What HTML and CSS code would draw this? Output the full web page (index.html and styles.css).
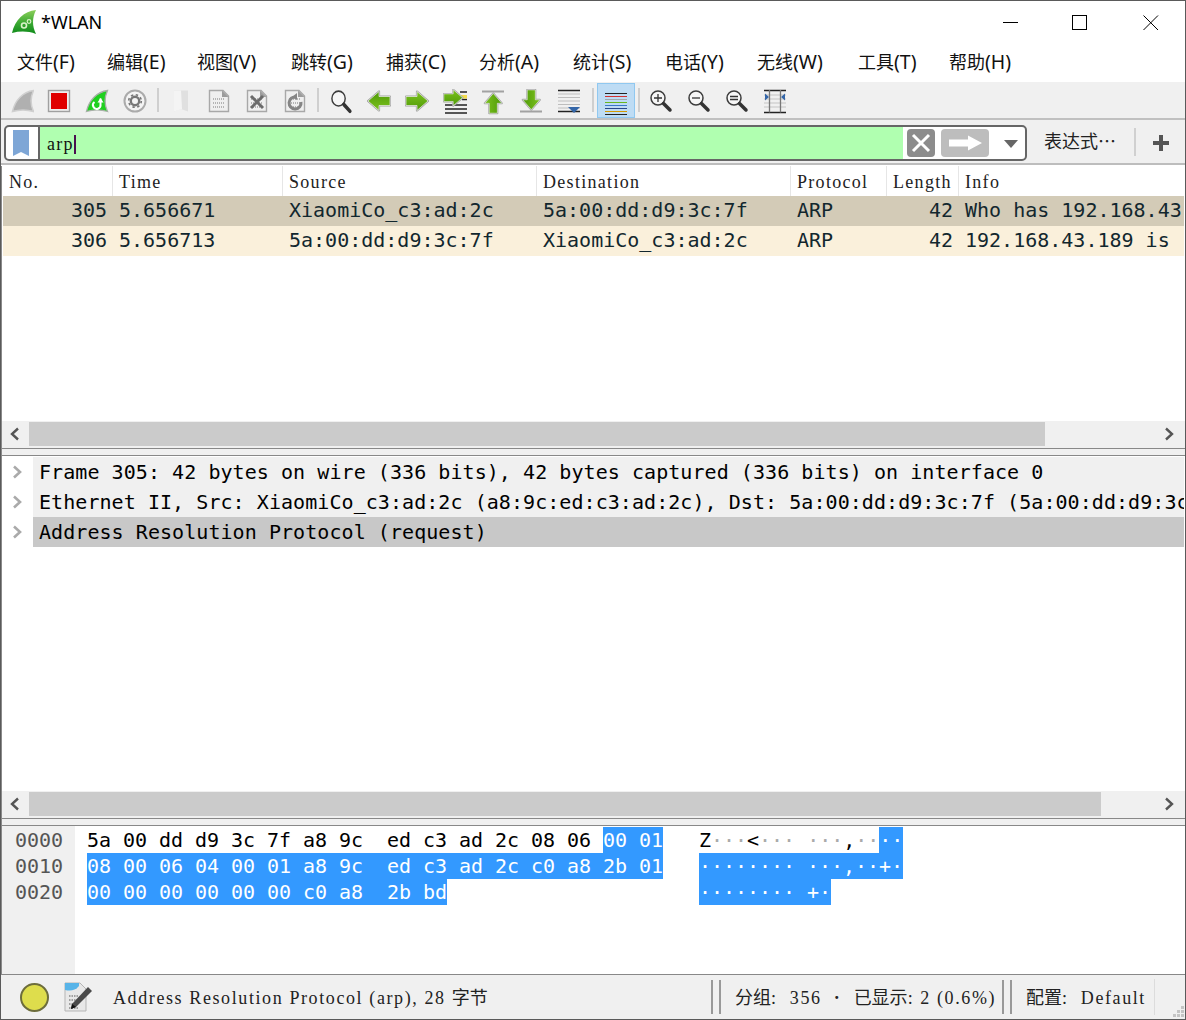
FILE: index.html
```html
<!DOCTYPE html>
<html lang="zh">
<head>
<meta charset="utf-8">
<title>*WLAN</title>
<link rel="stylesheet" href="styles.css">
</head>
<body>
<svg class="defs" aria-hidden="true">
  <defs>
    <linearGradient id="grn" x1="0" y1="0" x2="0" y2="1"><stop offset="0" stop-color="#7cc21e"/><stop offset="1" stop-color="#4f9a08"/></linearGradient>
    <linearGradient id="logo" x1="0" y1="0" x2="0" y2="1"><stop offset="0" stop-color="#8ccf5a"/><stop offset="0.55" stop-color="#3aa832"/><stop offset="1" stop-color="#0f8a1a"/></linearGradient>
    <g id="arr">
      <path d="M1 7.500H12V2.500L23 12L12 21.500V16.500H1Z" fill="none" stroke="#a2a2a2" stroke-width="2.200" stroke-linejoin="round"/>
      <path d="M1 7.500H12V2.500L23 12L12 21.500V16.500H1Z" fill="url(#grn)" stroke="#eee" stroke-width="0.700"/>
    </g>
    <g id="page">
      <path d="M2.500 1.500H16L21.500 7V22.500H2.500Z" fill="#efefef" stroke="#a8a8a8" stroke-width="1.400"/>
      <path d="M15 1.500L21.500 8H15Z" fill="#9c9c9c"/>
      <path d="M6 10H18M6 14H18M6 18H18" stroke="#b4b4b4" stroke-width="2" stroke-dasharray="1 1"/>
    </g>
    <g id="lens">
      <circle cx="9" cy="9" r="7" fill="#f6f6f6" stroke="#3c3c3c" stroke-width="1.500"/>
      <path d="M14.500 14.500L21 21" stroke="#333" stroke-width="3.500" stroke-linecap="round"/>
    </g>
  </defs>
</svg>
<div class="window">
  <header class="titlebar">
    <svg class="logo" viewBox="0 0 24 24"><path d="M24 0C12 1 3 10 0 23C8 21 16 21 24 24C20 16 20 8 24 0Z" fill="url(#logo)"/><circle cx="12" cy="15.500" r="2.500" fill="none" stroke="#d8f2c8" stroke-width="1.600"/><circle cx="17" cy="11.500" r="1.800" fill="none" stroke="#d8f2c8" stroke-width="1.200"/></svg>
    <span class="title">*WLAN</span>
    <div class="winctl">
      <svg class="winbtn" viewBox="0 0 16 16"><path d="M0 7.500H15" stroke="#000" fill="none"/></svg>
      <svg class="winbtn winbtn-max" viewBox="0 0 16 16"><rect x="0.500" y="0.500" width="14" height="14" stroke="#000" fill="none"/></svg>
      <svg class="winbtn" viewBox="0 0 16 16"><path d="M0.500 0.500L15 15M15 0.500L0.500 15" stroke="#000" fill="none"/></svg>
    </div>
  </header>
  <nav class="menubar">
    <span>文件<em>(F)</em></span><span>编辑<em>(E)</em></span><span>视图<em>(V)</em></span><span>跳转<em>(G)</em></span><span>捕获<em>(C)</em></span><span>分析<em>(A)</em></span><span>统计<em>(S)</em></span><span>电话<em>(Y)</em></span><span>无线<em>(W)</em></span><span>工具<em>(T)</em></span><span>帮助<em>(H)</em></span>
  </nav>
  <div class="toolbar">
    <div class="tb tb-first"><svg viewBox="0 0 24 26"><path d="M23.500 1.500C13 3 5 11 2.500 22.500C9 20.500 17 20.500 23.500 22.500C20.500 16 20.500 8 23.500 1.500Z" fill="#b0b0b0" stroke="#d0d0d0" stroke-width="1.500"/></svg></div>
    <div class="tb"><svg viewBox="0 0 24 26"><rect x="1.500" y="1.500" width="21" height="21" fill="#eee" stroke="#a0a0a0" stroke-width="1.400"/><rect x="4" y="4" width="16" height="16" fill="#e00000"/></svg></div>
    <div class="tb"><svg viewBox="0 0 24 26"><path d="M22.500 1.500C12 3 4 11 1.500 22.500C8 20.500 16 20.500 22.500 22.500C19.500 16 19.500 8 22.500 1.500Z" fill="#1fd01f" stroke="#a8b0a8" stroke-width="1.300"/><path d="M15.500 9.500V15.500A3.800 3.800 0 1 1 9.500 13" fill="none" stroke="#fff" stroke-width="2"/><path d="M12.500 13.500L15.500 9L18.500 13.500Z" fill="#fff"/></svg></div>
    <div class="tb"><svg viewBox="0 0 24 26"><circle cx="12" cy="12" r="10.500" fill="#f4f4f4" stroke="#ababab" stroke-width="2"/><circle cx="12" cy="12" r="4.200" fill="none" stroke="#777" stroke-width="2.400"/><circle cx="12" cy="12" r="6.300" fill="none" stroke="#777" stroke-width="1.600" stroke-dasharray="2.400 2.550"/></svg></div>
    <div class="tsep"></div>
    <div class="tb"><svg viewBox="0 0 24 26"><path d="M5 1.500H19V22.500L12 20L5 22.500Z" fill="#e0e0e0"/><path d="M5 1.500H12L13 20L5 22.500Z" fill="#f4f4f4"/></svg></div>
    <div class="tb"><svg viewBox="0 0 24 26"><use href="#page"/></svg></div>
    <div class="tb"><svg viewBox="0 0 24 26"><use href="#page"/><path d="M6 7L18 19M18 7L6 19" stroke="#6b6b6b" stroke-width="3"/></svg></div>
    <div class="tb"><svg viewBox="0 0 24 26"><use href="#page"/><path d="M13 8A6 6 0 1 0 18 13" fill="none" stroke="#858585" stroke-width="3"/><path d="M14 4V11L9 8Z" fill="#858585"/></svg></div>
    <div class="tsep"></div>
    <div class="tb"><svg viewBox="0 0 24 26"><use href="#lens" transform="translate(1 0) scale(0.95 1.060)"/></svg></div>
    <div class="tb"><svg viewBox="0 0 24 26"><use href="#arr" transform="rotate(180 12 12)"/></svg></div>
    <div class="tb"><svg viewBox="0 0 24 26"><use href="#arr"/></svg></div>
    <div class="tb"><svg viewBox="0 0 24 26"><path d="M2 24H24M2 20H24M2 16H24" stroke="#222" stroke-width="1.300"/><path d="M17 3H24M19 10.500H24" stroke="#222" stroke-width="1.300"/><rect x="18" y="6" width="6" height="3.500" fill="#f5dc4a"/><use href="#arr" transform="translate(0 -1.500) scale(0.85)"/></svg></div>
    <div class="tb"><svg viewBox="0 0 24 26"><path d="M1 2.500H23" stroke="#a2a2a2" stroke-width="2"/><use href="#arr" transform="translate(1.500 3.500) scale(0.9) rotate(-90 12 12)"/></svg></div>
    <div class="tb"><svg viewBox="0 0 24 26"><path d="M1 22.500H23" stroke="#a2a2a2" stroke-width="2"/><use href="#arr" transform="translate(1.500 0) scale(0.9) rotate(90 12 12)"/></svg></div>
    <div class="tb"><svg viewBox="0 0 24 26"><path d="M1 1.500H23M1 22.500H23" stroke="#222" stroke-width="1.300"/><path d="M1 5H23M1 8.500H23M1 12H23M1 15.500H23M1 19H23" stroke="#bdbdbd" stroke-width="1.200"/><path d="M11 18H23L17 24Z" fill="#3466a8"/></svg></div>
    <div class="tsep tsep-wide"></div>
    <div class="tb tb-on"><svg viewBox="0 0 24 26"><path d="M1 3.500H23" stroke="#222"/><path d="M1 6.500H23" stroke="#d43030"/><path d="M1 9.500H23" stroke="#999" stroke-width="0.800"/><path d="M1 12.500H23" stroke="#68b820"/><path d="M1 15.500H23" stroke="#3a78c8"/><path d="M1 18.500H23" stroke="#28488c"/><path d="M1 21.500H23" stroke="#d49a00"/><path d="M1 24.500H23" stroke="#222"/></svg></div>
    <div class="tsep tsep-narrow"></div>
    <div class="tb"><svg viewBox="0 0 24 26"><use href="#lens"/><path d="M5 9H13M9 5V13" stroke="#333" stroke-width="1.300"/></svg></div>
    <div class="tb"><svg viewBox="0 0 24 26"><use href="#lens"/><path d="M5 9H13" stroke="#333" stroke-width="1.300"/></svg></div>
    <div class="tb"><svg viewBox="0 0 24 26"><use href="#lens"/><path d="M5 7.500H13M5 10.500H13" stroke="#333" stroke-width="1.300"/></svg></div>
    <div class="tb"><svg viewBox="0 0 24 26"><path d="M1 1.500H23M1 23.500H23" stroke="#222" stroke-width="1.300"/><path d="M1 6H23M1 10H23M1 14H23M1 18H23" stroke="#c4c4c4" stroke-width="1.200"/><path d="M6.500 1V23.500M17.500 1V23.500" stroke="#777" stroke-width="1.300"/><path d="M2 4.500L6 8L2 11.500ZM22 4.500L18 8L22 11.500Z" fill="#3466a8"/></svg></div>
  </div>
  <div class="filterbar">
    <div class="filterbox">
      <div class="bookmark"><svg viewBox="0 0 16 26"><path d="M0 0H16V26L8 22L0 26Z" fill="#7ea6d6"/></svg></div>
      <div class="filterinput"><span class="serif-s">arp</span><i class="caret"></i></div>
      <div class="clearbtn"><svg viewBox="0 0 28 28"><path d="M6 6L22 22M22 6L6 22" stroke="#fff" stroke-width="3"/></svg></div>
      <div class="applybtn"><svg viewBox="0 0 48 28"><path d="M8 10.500H27V6.500L41 14L27 21.500V17.500H8Z" fill="#fff"/></svg></div>
      <div class="dropbtn"><svg viewBox="0 0 14 8"><path d="M0 0H14L7 8Z" fill="#666"/></svg></div>
    </div>
    <span class="expr">表达式…</span>
    <i class="fsep"></i>
    <svg class="plus" viewBox="0 0 18 18"><path d="M1 9H17M9 1V17" stroke="#555" stroke-width="4"/></svg>
  </div>
  <section class="packets">
    <div class="grid-row headrow"><span>No.</span><span>Time</span><span>Source</span><span>Destination</span><span>Protocol</span><span>Length</span><span>Info</span></div>
    <div class="grid-row datarow sel"><span class="num">305</span><span>5.656671</span><span>XiaomiCo_c3:ad:2c</span><span>5a:00:dd:d9:3c:7f</span><span>ARP</span><span class="num">42</span><span>Who has 192.168.43</span></div>
    <div class="grid-row datarow"><span class="num">306</span><span>5.656713</span><span>5a:00:dd:d9:3c:7f</span><span>XiaomiCo_c3:ad:2c</span><span>ARP</span><span class="num">42</span><span>192.168.43.189 is</span></div>
    <div class="spacer"></div>
    <div class="hscroll">
      <svg class="chev" viewBox="0 0 10 14"><path d="M8 1.500L2 7L8 12.500" fill="none" stroke="#555" stroke-width="2.400"/></svg>
      <div class="track"><div class="thumb thumb-a"></div></div>
      <svg class="chev chev-r" viewBox="0 0 10 14"><path d="M2 1.500L8 7L2 12.500" fill="none" stroke="#555" stroke-width="2.400"/></svg>
    </div>
  </section>
  <div class="split"></div>
  <section class="details">
    <div class="treerow"><svg class="tw" viewBox="0 0 10 14"><path d="M2 1.500L8 7L2 12.500" fill="none" stroke="#aaa" stroke-width="2.600"/></svg><div class="treetext">Frame 305: 42 bytes on wire (336 bits), 42 bytes captured (336 bits) on interface 0</div></div>
    <div class="treerow"><svg class="tw" viewBox="0 0 10 14"><path d="M2 1.500L8 7L2 12.500" fill="none" stroke="#aaa" stroke-width="2.600"/></svg><div class="treetext">Ethernet II, Src: XiaomiCo_c3:ad:2c (a8:9c:ed:c3:ad:2c), Dst: 5a:00:dd:d9:3c:7f (5a:00:dd:d9:3c:7f)</div></div>
    <div class="treerow"><svg class="tw" viewBox="0 0 10 14"><path d="M2 1.500L8 7L2 12.500" fill="none" stroke="#aaa" stroke-width="2.600"/></svg><div class="treetext on">Address Resolution Protocol (request)</div></div>
    <div class="spacer"></div>
    <div class="hscroll">
      <svg class="chev" viewBox="0 0 10 14"><path d="M8 1.500L2 7L8 12.500" fill="none" stroke="#555" stroke-width="2.400"/></svg>
      <div class="track"><div class="thumb thumb-b"></div></div>
      <svg class="chev chev-r" viewBox="0 0 10 14"><path d="M2 1.500L8 7L2 12.500" fill="none" stroke="#555" stroke-width="2.400"/></svg>
    </div>
  </section>
  <div class="split"></div>
  <section class="hex">
    <div class="offsets"><div>0000</div><div>0010</div><div>0020</div></div>
    <div class="bytes">
      <div>5a 00 dd d9 3c 7f a8 9c  ed c3 ad 2c 08 06 <b>00 01</b>   Z<i>···</i>&lt;<i>···</i> <i>···</i>,<i>··</i><b>··</b></div>
      <div><b>08 00 06 04 00 01 a8 9c  ed c3 ad 2c c0 a8 2b 01</b>   <b>········ ···,··+·</b></div>
      <div><b>00 00 00 00 00 00 c0 a8  2b bd</b>                     <b>········ +·</b></div>
    </div>
  </section>
  <footer class="statusbar">
    <i class="led"></i>
    <svg class="noteicon" viewBox="0 0 28 30"><path d="M1 1H16L22 7V29H1Z" fill="#e8e8e8" stroke="#b5b5b5"/><path d="M1 1H15V4C11 9 6 9 1 8Z" fill="#58b4e8"/><path d="M5 14H15M5 18H14M5 22H15M5 26H14" stroke="#a0a0a0" stroke-width="2" stroke-dasharray="1.500 1"/><path d="M8 22L24 5L28 9L12 25L7 27Z" fill="#4a4a4a"/><path d="M7 27L8 22L12 25Z" fill="#111"/></svg>
    <div class="msg">Address Resolution Protocol (arp), 28 <span class="cjk">字节</span></div>
    <i class="dsep"></i>
    <div class="seg seg-a"><span class="cjk">分组</span>:  356  <span class="bullet">·</span>  <span class="cjk">已显示</span>: 2 (0.6%)</div>
    <i class="dsep"></i>
    <div class="seg seg-b"><span class="cjk">配置</span>:  Default</div>
    <i class="lsep"></i>
    <svg class="grip" viewBox="0 0 12 12"><path d="M9 0h3v3H9zM5 4h3v3H5zM9 4h3v3H9zM1 8h3v3H1zM5 8h3v3H5zM9 8h3v3H9z" fill="#c4c4c4"/></svg>
  </footer>
</div>
</body>
</html>
```

FILE: styles.css
```css
* { box-sizing: border-box; }
html, body { margin: 0; padding: 0; }
body { background: #fff; overflow: hidden; }
.defs { position: absolute; width: 0; height: 0; }
.window {
  width: 1186px; height: 1020px;
  border: 1px solid #5a5a5a;
  display: flex; flex-direction: column;
  background: #fff; color: #000;
  font-family: "Noto Sans", "Noto Sans CJK SC", sans-serif;
  overflow: hidden;
  position: relative;
}
.window::after { content: ""; position: absolute; left: 0; top: 165px; bottom: 44px; width: 1px; background: #8a8a8a; }
.titlebar { height: 40px; flex: none; display: flex; align-items: center; padding-left: 11px; }
.logo { width: 24px; height: 24px; margin-top: 1px; }
.title { margin-left: 5px; font-size: 18px; padding-top: 1px; }
.winctl { margin-left: auto; display: flex; padding: 4px 26px 0 0; }
.winbtn { width: 16px; height: 16px; display: block; }
.winbtn-max { margin: 0 55px 0 53px; }

.menubar { height: 40px; flex: none; display: grid; grid-template-columns: 90px 90px 94px 95px 93px 94px 92px 92px 101px 91px auto; justify-content: start; align-items: center; padding: 1px 0 0 16px; font-family: "Noto Sans CJK SC", sans-serif; font-size: 18px; white-space: nowrap; color: #111; }
.menubar em { font-family: "Noto Sans", sans-serif; font-style: normal; font-size: 19.500px; }

.toolbar { height: 38px; margin-top: 1px; flex: none; display: flex; background: #f0f0f0; border-bottom: 2px solid #c0c0c0; padding-left: 3px; }
.tb { width: 38px; height: 36px; flex: none; display: flex; justify-content: center; align-items: flex-start; padding-top: 7px; }
.tb svg { width: 24px; height: 26px; display: block; }
.tb-first { width: 36px; }
.tb-on { height: 35px; margin-top: 1px; padding-top: 6px; background: #bedcf4; border: 1px solid #90c8f0; }
.tsep { width: 8px; flex: none; display: flex; justify-content: center; padding-top: 6px; }
.tsep::before { content: ""; width: 2px; height: 24px; background: #cfcfcf; }
.tsep-wide { width: 9px; }
.tsep-narrow { width: 7px; }

.filterbar { height: 45px; flex: none; display: flex; align-items: flex-start; background: #f0f0f0; border-bottom: 2px solid #bdbdbd; padding: 5px 0 0 3px; }
.filterbox { width: 1023px; height: 36px; flex: none; display: flex; align-items: center; background: #fff; border: 2px solid #666; border-radius: 5px; overflow: hidden; }
.bookmark { width: 34px; height: 100%; border-right: 2px solid #666; display: flex; align-items: center; justify-content: center; padding-right: 2px; }
.bookmark svg { width: 16px; height: 26px; display: block; }
.filterinput { width: 863px; height: 100%; background: #b0ffb0; display: flex; align-items: center; padding: 3px 0 0 7px; }
.serif-s { font-family: "Liberation Serif", serif; font-size: 18px; letter-spacing: 1.300px; color: #111; }
.caret { width: 2px; height: 19px; background: #4a1050; }
.clearbtn { width: 28px; height: 28px; margin-left: 4px; background: #8c8c8c; border-radius: 4px; }
.applybtn { width: 48px; height: 28px; margin-left: 6px; background: #bdbdbd; border-radius: 4px; }
.clearbtn svg, .applybtn svg { display: block; width: 100%; height: 100%; }
.dropbtn { width: 14px; height: 8px; margin-left: 15px; margin-top: 1px; }
.dropbtn svg { display: block; width: 14px; height: 8px; }
.expr { margin-left: 17px; font-family: "Noto Sans CJK SC", sans-serif; font-size: 18px; line-height: 30px; color: #222; white-space: nowrap; }
.fsep { width: 2px; height: 28px; margin: 3px 0 0 18px; background: #d0d0d0; }
.plus { width: 18px; height: 18px; margin: 9px 0 0 16px; }

.packets { height: 283px; flex: none; display: flex; flex-direction: column; padding-top: 1px; }
.grid-row { display: grid; grid-template-columns: 110px 170px 254px 254px 96px 72px 1fr; height: 30px; margin: 0 1px 0 2px; line-height: 30px; white-space: nowrap; }
.grid-row > span { overflow: hidden; padding-left: 6px; }
.headrow { font-family: "Liberation Serif", serif; font-size: 18px; letter-spacing: 1.300px; color: #222; }
.headrow > span { border-right: 1px solid #e6e6e6; padding-top: 1px; }
.headrow > span:last-child { border-right: 0; }
.datarow { font-family: "DejaVu Sans Mono", monospace; font-size: 20px; line-height: 29px; color: #12272e; background: #faf0db; }
.datarow.sel { background: #d3cbb7; }
.datarow > .num { text-align: right; padding: 0 6px 0 0; }
.spacer { flex: 1; }
.hscroll { height: 27px; flex: none; display: flex; background: #f0f0f0; padding: 1px 0 2px; }
.chev { width: 28px; height: 24px; flex: none; padding: 5px 9px; }
.chev-r { margin-right: 2px; }
.track { flex: 1; }
.thumb { height: 24px; background: #cbcbcb; }
.thumb-a { width: 1016px; }
.thumb-b { width: 1072px; }
.split { height: 8px; flex: none; background: #f0f0f0; border-top: 1px solid #888; border-bottom: 1px solid #888; }

.details { height: 362px; flex: none; display: flex; flex-direction: column; padding-top: 1px; }
.treerow { display: flex; height: 30px; flex: none; padding-right: 1px; }
.tw { width: 32px; height: 30px; flex: none; padding: 7px 11px; }
.treetext { flex: 1; min-width: 0; overflow: hidden; white-space: nowrap; background: #f0f0f0; padding-left: 6px; font-family: "DejaVu Sans Mono", monospace; font-size: 20px; letter-spacing: 0.060px; line-height: 30px; }
.treetext.on { background: #c8c8c8; }

.hex { height: 149px; flex: none; display: flex; border-bottom: 1px solid #888; font-family: "DejaVu Sans Mono", monospace; font-size: 20px; letter-spacing: -0.040px; line-height: 26px; }
.offsets { width: 74px; flex: none; background: #f0f0f0; padding: 1px 0 0 14px; color: #555; }
.bytes { padding: 1px 0 0 12px; }
.bytes > div { height: 26px; white-space: pre; }
.bytes b { display: inline-block; height: 26px; font-weight: normal; background: #3399ff; color: #fff; vertical-align: top; white-space: pre; }
.bytes i { font-style: normal; color: #aaa; }

.statusbar { flex: 1; min-height: 0; display: flex; align-items: center; background: #f0f0f0; font-family: "Liberation Serif", serif; font-size: 18px; letter-spacing: 1.600px; color: #222; white-space: pre; position: relative; }
.led { width: 29px; height: 29px; flex: none; margin-left: 19px; border-radius: 50%; background: #dedd4c; border: 2px solid #6d6d3c; }
.noteicon { width: 28px; height: 30px; flex: none; margin-left: 15px; }
.msg { flex: 1; padding-left: 21px; }
.cjk { font-family: "Noto Sans CJK SC", sans-serif; font-size: 18px; line-height: 20px; letter-spacing: 0; }
.bullet { font-weight: bold; }
.dsep { width: 10px; height: 34px; flex: none; border-left: 2px solid #999; border-right: 2px solid #999; }
.seg { padding-left: 14px; }
.seg-a { width: 281px; }
.seg-b { width: 142px; }
.lsep { width: 1px; height: 36px; flex: none; margin-right: 30px; background: #dcdcdc; }
.grip { position: absolute; right: 1px; bottom: 1px; width: 12px; height: 12px; }
```
